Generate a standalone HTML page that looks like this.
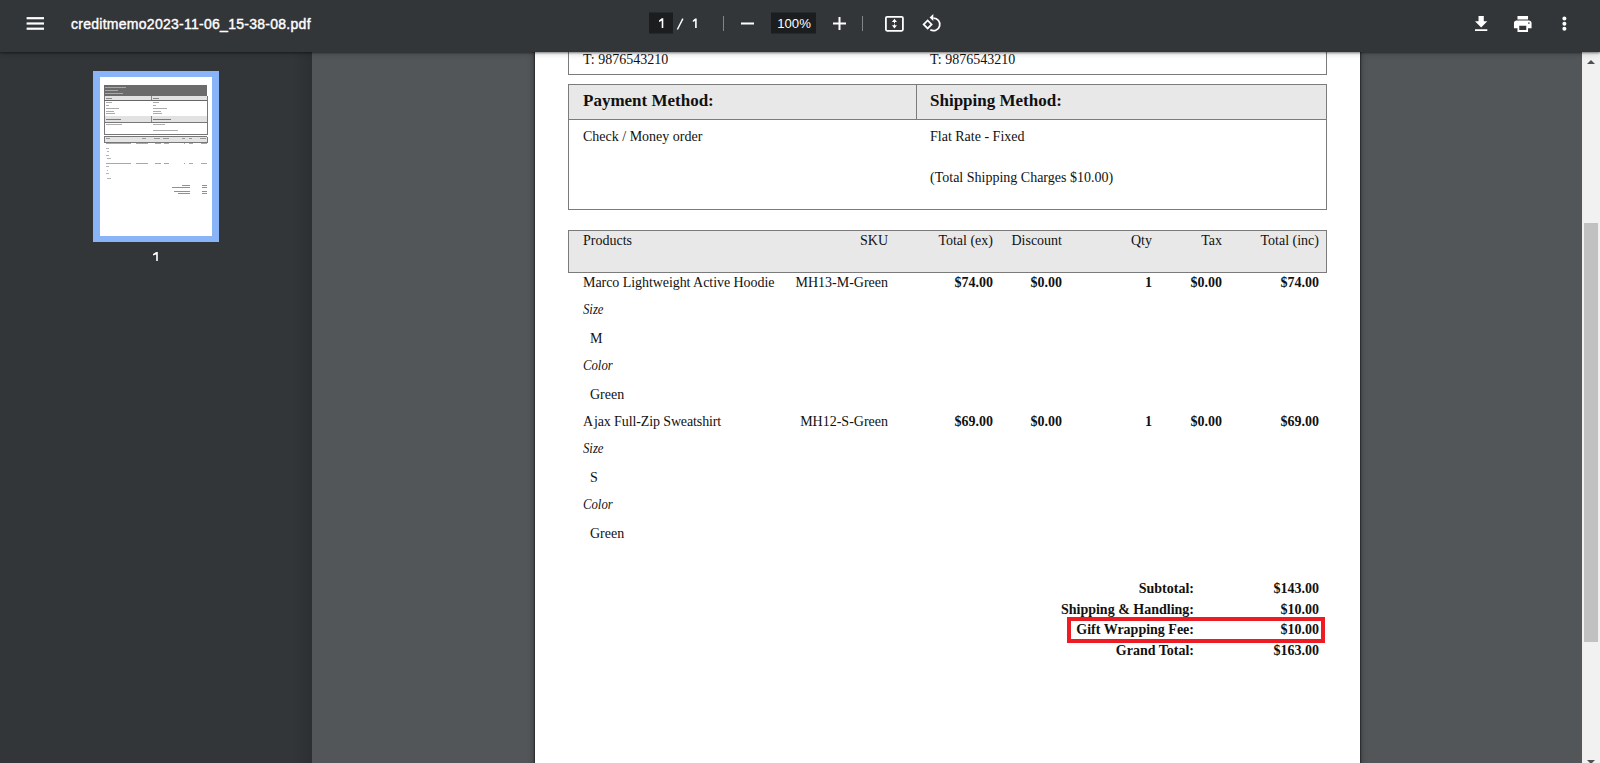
<!DOCTYPE html>
<html><head><meta charset="utf-8">
<style>
*{margin:0;padding:0;box-sizing:border-box}
html,body{width:1600px;height:763px;overflow:hidden;background:#525659;font-family:"Liberation Sans",sans-serif}
.abs{position:absolute}
#toolbar{position:absolute;left:0;top:0;width:1600px;height:52px;background:#323639;z-index:10;box-shadow:0 1px 2px rgba(0,0,0,.45),0 2px 6px rgba(0,0,0,.15)}
#sidebar{position:absolute;left:0;top:52px;width:312px;height:711px;background:#323639 linear-gradient(to right,rgba(0,0,0,0) 292px,rgba(0,0,0,.12) 312px);z-index:5}
#main{position:absolute;left:312px;top:52px;width:1270px;height:711px;background:#525659;overflow:hidden}
#page{position:absolute;left:535px;top:-200px;width:825px;height:1100px;background:#fff;box-shadow:0 0 1px 1px rgba(0,0,0,.35),0 0 6px 1px rgba(0,0,0,.3)}
.doc{font-family:"Liberation Serif",serif;font-size:14px;line-height:14px;color:#111;white-space:nowrap}
.doc .t{position:absolute;margin-top:2px}
.doc .r{position:absolute;text-align:right;margin-top:2px}
.b{font-weight:bold}
.doc .i{font-style:italic;transform:scaleX(0.91);transform-origin:0 0;margin-top:1px}
.box{position:absolute;border:1px solid #7b7b7b}
.hdr{background:#e9e8e8}
.tt{position:absolute;color:#fff;font-size:14px;line-height:16px;white-space:nowrap}
#scroll{position:absolute;left:1582px;top:52px;width:18px;height:711px;background:#f1f1f1;z-index:6}
</style></head>
<body>
<div id="main"></div>
<div id="page"></div>

<div class="doc" id="docwrap">
  <!-- address table bottom -->
  <div class="box" style="left:568px;top:-10px;width:759px;height:85px"></div>
  <div class="t" style="left:583px;top:51px">T: 9876543210</div>
  <div class="t" style="left:930px;top:51px">T: 9876543210</div>

  <!-- payment/shipping -->
  <div class="box hdr" style="left:568px;top:84px;width:759px;height:36px"></div>
  <div class="box" style="left:568px;top:119px;width:759px;height:91px;border-top:none"></div>
  <div class="abs" style="left:916px;top:84px;width:1px;height:36px;background:#7b7b7b"></div>
  <div class="t b" style="left:583px;top:92px;font-size:17px;line-height:17px;margin-top:0px">Payment Method:</div>
  <div class="t b" style="left:930px;top:92px;font-size:17px;line-height:17px;margin-top:0px">Shipping Method:</div>
  <div class="t" style="left:583px;top:128px">Check / Money order</div>
  <div class="t" style="left:930px;top:128px">Flat Rate - Fixed</div>
  <div class="t" style="left:930px;top:169px">(Total Shipping Charges $10.00)</div>

  <!-- products header -->
  <div class="box hdr" style="left:568px;top:230px;width:759px;height:43px"></div>
  <div class="t" style="left:583px;top:232px">Products</div>
  <div class="r" style="right:calc(1600px - 888px);top:232px">SKU</div>
  <div class="r" style="right:calc(1600px - 993px);top:232px">Total (ex)</div>
  <div class="r" style="right:calc(1600px - 1062px);top:232px">Discount</div>
  <div class="r" style="right:calc(1600px - 1152px);top:232px">Qty</div>
  <div class="r" style="right:calc(1600px - 1222px);top:232px">Tax</div>
  <div class="r" style="right:calc(1600px - 1319px);top:232px">Total (inc)</div>

  <!-- item 1 -->
  <div class="t" style="left:583px;top:274px" ><span style="letter-spacing:-0.06px">Marco Lightweight Active Hoodie</span></div>
  <div class="r" style="right:calc(1600px - 888px);top:274px">MH13-M-Green</div>
  <div class="r b" style="right:calc(1600px - 993px);top:274px">$74.00</div>
  <div class="r b" style="right:calc(1600px - 1062px);top:274px">$0.00</div>
  <div class="r b" style="right:calc(1600px - 1152px);top:274px">1</div>
  <div class="r b" style="right:calc(1600px - 1222px);top:274px">$0.00</div>
  <div class="r b" style="right:calc(1600px - 1319px);top:274px">$74.00</div>
  <div class="t i" style="left:583px;top:302px">Size</div>
  <div class="t" style="left:590px;top:330px">M</div>
  <div class="t i" style="left:583px;top:358px">Color</div>
  <div class="t" style="left:590px;top:386px">Green</div>

  <!-- item 2 -->
  <div class="t" style="left:583px;top:413px"><span style="letter-spacing:-0.12px">A<span style="margin-left:1px">jax Full-Zip Sweatshirt</span></span></div>
  <div class="r" style="right:calc(1600px - 888px);top:413px">MH12-S-Green</div>
  <div class="r b" style="right:calc(1600px - 993px);top:413px">$69.00</div>
  <div class="r b" style="right:calc(1600px - 1062px);top:413px">$0.00</div>
  <div class="r b" style="right:calc(1600px - 1152px);top:413px">1</div>
  <div class="r b" style="right:calc(1600px - 1222px);top:413px">$0.00</div>
  <div class="r b" style="right:calc(1600px - 1319px);top:413px">$69.00</div>
  <div class="t i" style="left:583px;top:441px">Size</div>
  <div class="t" style="left:590px;top:469px">S</div>
  <div class="t i" style="left:583px;top:497px">Color</div>
  <div class="t" style="left:590px;top:525px">Green</div>

  <!-- totals -->
  <div class="r b" style="right:calc(1600px - 1194px);top:580px">Subtotal:</div>
  <div class="r b" style="right:calc(1600px - 1319px);top:580px">$143.00</div>
  <div class="r b" style="right:calc(1600px - 1194px);top:601px">Shipping &amp; Handling:</div>
  <div class="r b" style="right:calc(1600px - 1319px);top:601px">$10.00</div>
  <div class="r b" style="right:calc(1600px - 1194px);top:621px">Gift Wrapping Fee:</div>
  <div class="r b" style="right:calc(1600px - 1319px);top:621px">$10.00</div>
  <div class="r b" style="right:calc(1600px - 1194px);top:642px">Grand Total:</div>
  <div class="r b" style="right:calc(1600px - 1319px);top:642px">$163.00</div>
  <div class="abs" style="left:1067px;top:617px;width:258px;height:25.5px;border:4px solid #ed1c24"></div>
</div>

<div id="sidebar"></div>
<div id="thumb" style="position:absolute;left:0;top:0;z-index:6"><div class="abs" style="left:93px;top:71px;width:126px;height:171px;background:#8ab4f8"></div>
<div class="abs" style="left:99.5px;top:77px;width:112.5px;height:159px;background:#fff"></div>
<div class="abs" style="left:104.2px;top:84.9px;width:103.3px;height:11.0px;background:#6b6b6b"></div>
<div class="abs" style="left:105px;top:87px;width:21px;height:1px;background:#a8a8a8"></div>
<div class="abs" style="left:105px;top:89.8px;width:13px;height:1.0px;background:#a8a8a8"></div>
<div class="abs" style="left:105px;top:92.6px;width:18px;height:1.0px;background:#a8a8a8"></div>
<div class="abs" style="left:104.2px;top:95.9px;width:103.3px;height:4.4px;background:#e2e2e2"></div>
<div class="abs" style="left:104.2px;top:95.9px;width:0.7px;height:20.1px;background:#777"></div>
<div class="abs" style="left:206.8px;top:95.9px;width:0.7px;height:20.1px;background:#777"></div>
<div class="abs" style="left:151px;top:95.9px;width:0.7px;height:4.4px;background:#888"></div>
<div class="abs" style="left:104.2px;top:99.8px;width:103.3px;height:0.8px;background:#666"></div>
<div class="abs" style="left:105.5px;top:97.5px;width:6.5px;height:1.0px;background:#888"></div>
<div class="abs" style="left:153px;top:97.5px;width:6px;height:1.0px;background:#888"></div>
<div class="abs" style="left:105.5px;top:102px;width:6.0px;height:1px;background:#acacac"></div>
<div class="abs" style="left:153px;top:102px;width:6px;height:1px;background:#acacac"></div>
<div class="abs" style="left:105.5px;top:105px;width:3.0px;height:1px;background:#acacac"></div>
<div class="abs" style="left:153px;top:105px;width:3px;height:1px;background:#acacac"></div>
<div class="abs" style="left:105.5px;top:107.8px;width:13.0px;height:1.0px;background:#acacac"></div>
<div class="abs" style="left:153px;top:107.8px;width:14px;height:1.0px;background:#acacac"></div>
<div class="abs" style="left:105.5px;top:110.6px;width:8.0px;height:1.0px;background:#acacac"></div>
<div class="abs" style="left:153px;top:110.6px;width:8px;height:1.0px;background:#acacac"></div>
<div class="abs" style="left:105.5px;top:113.4px;width:9.0px;height:1.0px;background:#acacac"></div>
<div class="abs" style="left:153px;top:113.4px;width:9px;height:1.0px;background:#acacac"></div>
<div class="abs" style="left:104.2px;top:115.6px;width:103.3px;height:0.7px;background:#666"></div>
<div class="abs" style="left:104.2px;top:116.3px;width:103.3px;height:5.7px;background:#e2e2e2"></div>
<div class="abs" style="left:151px;top:116.3px;width:0.7px;height:5.7px;background:#888"></div>
<div class="abs" style="left:104.2px;top:121.6px;width:103.3px;height:0.7px;background:#777"></div>
<div class="abs" style="left:105.5px;top:118.6px;width:15.5px;height:1.2px;background:#7a7a7a"></div>
<div class="abs" style="left:153px;top:118.6px;width:18px;height:1.2px;background:#7a7a7a"></div>
<div class="abs" style="left:104.2px;top:116px;width:0.7px;height:18.6px;background:#777"></div>
<div class="abs" style="left:206.8px;top:116px;width:0.7px;height:18.6px;background:#777"></div>
<div class="abs" style="left:104.2px;top:134px;width:103.3px;height:0.7px;background:#777"></div>
<div class="abs" style="left:105.5px;top:123.8px;width:16.5px;height:1.0px;background:#acacac"></div>
<div class="abs" style="left:153px;top:123.8px;width:12px;height:1.0px;background:#acacac"></div>
<div class="abs" style="left:153px;top:129.6px;width:25px;height:1.0px;background:#acacac"></div>
<div class="abs" style="left:104.2px;top:136.5px;width:103.3px;height:6.0px;background:#e4e4e4"></div>
<div class="abs" style="left:104.2px;top:136.3px;width:103.3px;height:0.7px;background:#777"></div>
<div class="abs" style="left:104.2px;top:142px;width:103.3px;height:0.7px;background:#777"></div>
<div class="abs" style="left:104.2px;top:136.5px;width:0.7px;height:6.0px;background:#777"></div>
<div class="abs" style="left:206.8px;top:136.5px;width:0.7px;height:6.0px;background:#777"></div>
<div class="abs" style="left:105.5px;top:138px;width:4.5px;height:1px;background:#989898"></div>
<div class="abs" style="left:142px;top:138px;width:4px;height:1px;background:#989898"></div>
<div class="abs" style="left:153.5px;top:138px;width:6.5px;height:1px;background:#989898"></div>
<div class="abs" style="left:163px;top:138px;width:6px;height:1px;background:#989898"></div>
<div class="abs" style="left:182px;top:138px;width:3px;height:1px;background:#989898"></div>
<div class="abs" style="left:189px;top:138px;width:3px;height:1px;background:#989898"></div>
<div class="abs" style="left:200px;top:138px;width:6px;height:1px;background:#989898"></div>
<div class="abs" style="left:105.5px;top:143.4px;width:25.5px;height:1.0px;background:#a8a8a8"></div>
<div class="abs" style="left:136px;top:143.4px;width:12px;height:1.0px;background:#a8a8a8"></div>
<div class="abs" style="left:155px;top:143.4px;width:6px;height:1.0px;background:#a8a8a8"></div>
<div class="abs" style="left:164px;top:143.4px;width:5px;height:1.0px;background:#a8a8a8"></div>
<div class="abs" style="left:183.5px;top:143.4px;width:1.0px;height:1.0px;background:#a8a8a8"></div>
<div class="abs" style="left:189px;top:143.4px;width:4px;height:1.0px;background:#a8a8a8"></div>
<div class="abs" style="left:201px;top:143.4px;width:5.5px;height:1.0px;background:#a8a8a8"></div>
<div class="abs" style="left:105.5px;top:162.6px;width:25.5px;height:1.0px;background:#a8a8a8"></div>
<div class="abs" style="left:136px;top:162.6px;width:12px;height:1.0px;background:#a8a8a8"></div>
<div class="abs" style="left:155px;top:162.6px;width:6px;height:1.0px;background:#a8a8a8"></div>
<div class="abs" style="left:164px;top:162.6px;width:5px;height:1.0px;background:#a8a8a8"></div>
<div class="abs" style="left:183.5px;top:162.6px;width:1.0px;height:1.0px;background:#a8a8a8"></div>
<div class="abs" style="left:189px;top:162.6px;width:4px;height:1.0px;background:#a8a8a8"></div>
<div class="abs" style="left:201px;top:162.6px;width:5.5px;height:1.0px;background:#a8a8a8"></div>
<div class="abs" style="left:105.5px;top:147.8px;width:3.0px;height:1.0px;background:#b4b4b4"></div>
<div class="abs" style="left:106.5px;top:150.8px;width:2.0px;height:1.0px;background:#b4b4b4"></div>
<div class="abs" style="left:105.5px;top:154.8px;width:3.5px;height:1.0px;background:#b4b4b4"></div>
<div class="abs" style="left:106.5px;top:158.4px;width:4.5px;height:1.0px;background:#b4b4b4"></div>
<div class="abs" style="left:105.5px;top:166.2px;width:3.0px;height:1.0px;background:#b4b4b4"></div>
<div class="abs" style="left:106.5px;top:169.8px;width:1.5px;height:1.0px;background:#b4b4b4"></div>
<div class="abs" style="left:105.5px;top:173.3px;width:3.5px;height:1.0px;background:#b4b4b4"></div>
<div class="abs" style="left:106.5px;top:177.6px;width:4.5px;height:1.0px;background:#b4b4b4"></div>
<div class="abs" style="left:181.5px;top:185.1px;width:8.3px;height:1.0px;background:#909090"></div>
<div class="abs" style="left:201.5px;top:185.1px;width:5.2px;height:1.0px;background:#909090"></div>
<div class="abs" style="left:172px;top:187.4px;width:17.8px;height:1.0px;background:#909090"></div>
<div class="abs" style="left:201.5px;top:187.4px;width:5.2px;height:1.0px;background:#909090"></div>
<div class="abs" style="left:174px;top:190.7px;width:15.8px;height:1.0px;background:#909090"></div>
<div class="abs" style="left:201.5px;top:190.7px;width:5.2px;height:1.0px;background:#909090"></div>
<div class="abs" style="left:178px;top:193px;width:11.8px;height:1px;background:#909090"></div>
<div class="abs" style="left:201.5px;top:193px;width:5.2px;height:1px;background:#909090"></div><svg class="abs" style="left:0;top:0" width="312" height="300" fill="#fff"><path d="M156.2 252 L157.79999999999998 252 L157.79999999999998 261 L156.2 261 L156.2 254.4 L153 255.6 L153 254.1 Z"/></svg></div>
<div id="scroll"><div class="abs" style="left:2px;top:171px;width:14px;height:418.5px;background:#c1c1c1"></div>
<svg class="abs" style="left:0;top:0" width="18" height="711"><path d="M5 12 L9 8 L13 12 Z" fill="#505050"/><path d="M5 708 L9 712 L13 708 Z" fill="#505050"/></svg></div>
<div id="toolbar">
  <svg width="1600" height="52" style="position:absolute;left:0;top:0" fill="#fff">
    <!-- hamburger -->
    <rect x="26.6" y="17.1" width="17.4" height="2.2"/>
    <rect x="26.6" y="22.4" width="17.4" height="2.2"/>
    <rect x="26.6" y="27.6" width="17.4" height="2.2"/>
    <!-- page box -->
    <rect x="649" y="12.5" width="24" height="21" fill="#1b1d1f"/>
    <path d="M661.7 18.3 L663.3000000000001 18.3 L663.3000000000001 28 L661.7 28 L661.7 20.7 L659 21.9 L659 20.4 Z"/><path d="M695.1 18.5 L696.7 18.5 L696.7 28 L695.1 28 L695.1 20.9 L692.8 22.1 L692.8 20.6 Z"/><path d="M677.4 29.5 L682.9 18.6" stroke="#fff" stroke-width="1.4"/>
    <!-- separators -->
    <rect x="723" y="16" width="1" height="15" fill="#80858a"/>
    <rect x="862" y="16" width="1" height="15" fill="#80858a"/>
    <!-- minus -->
    <rect x="741" y="22.5" width="13" height="2"/>
    <!-- zoom box -->
    <rect x="771" y="12.5" width="45" height="21" fill="#1b1d1f"/>
    <!-- plus -->
    <rect x="833" y="22.5" width="13" height="2"/>
    <rect x="838.5" y="17" width="2" height="13"/>
    <!-- fit -->
    <rect x="885.9" y="16.9" width="17" height="13.9" rx="1.2" fill="none" stroke="#fff" stroke-width="1.8"/>
    <path d="M891.9 22 L894.45 18.8 L897 22 Z M893.95 21.8 h1 v1.4 h-1 Z M891.9 25.2 L897 25.2 L894.45 28.6 Z M893.95 24.2 h1 v1.2 h-1 Z"/>
    <!-- rotate -->
    <path d="M923.7 24.45 L927.65 20.5 L931.6 24.45 L927.65 28.4 Z" fill="none" stroke="#fff" stroke-width="1.75"/>
    <path d="M933.4 18.1 A6.3 6.3 0 1 1 930.3 29.8" fill="none" stroke="#fff" stroke-width="1.75"/>
    <path d="M929.6 17.5 L933.3 14 L933.3 21 Z"/>
    <!-- download -->
    <g transform="translate(1470.6 13.4) scale(0.88)"><path d="M19 9h-4V3H9v6H5l7 7 7-7zM5 18v2h14v-2H5z"/></g>
    <!-- print -->
    <g transform="translate(1512.2 13.4) scale(0.88)"><path d="M19 8H5c-1.66 0-3 1.34-3 3v6h4v4h12v-4h4v-6c0-1.66-1.34-3-3-3zm-3 11H8v-5h8v5zm3-7c-.55 0-1-.45-1-1s.45-1 1-1 1 .45 1 1-.45 1-1 1zm-1-9H6v4h12V3z"/></g>
    <!-- more -->
    <circle cx="1564.4" cy="18.5" r="2"/>
    <circle cx="1564.4" cy="23.65" r="2"/>
    <circle cx="1564.4" cy="28.8" r="2"/>
  </svg>
  <div class="tt" style="left:71px;top:16px;font-weight:normal;font-size:14px;letter-spacing:0.27px;-webkit-text-stroke:0.4px #fff">creditmemo2023-11-06_15-38-08.pdf</div>
        <div class="tt" style="left:771.5px;width:45px;text-align:center;top:16px;font-size:13.2px">100%</div>
</div>
</body></html>
